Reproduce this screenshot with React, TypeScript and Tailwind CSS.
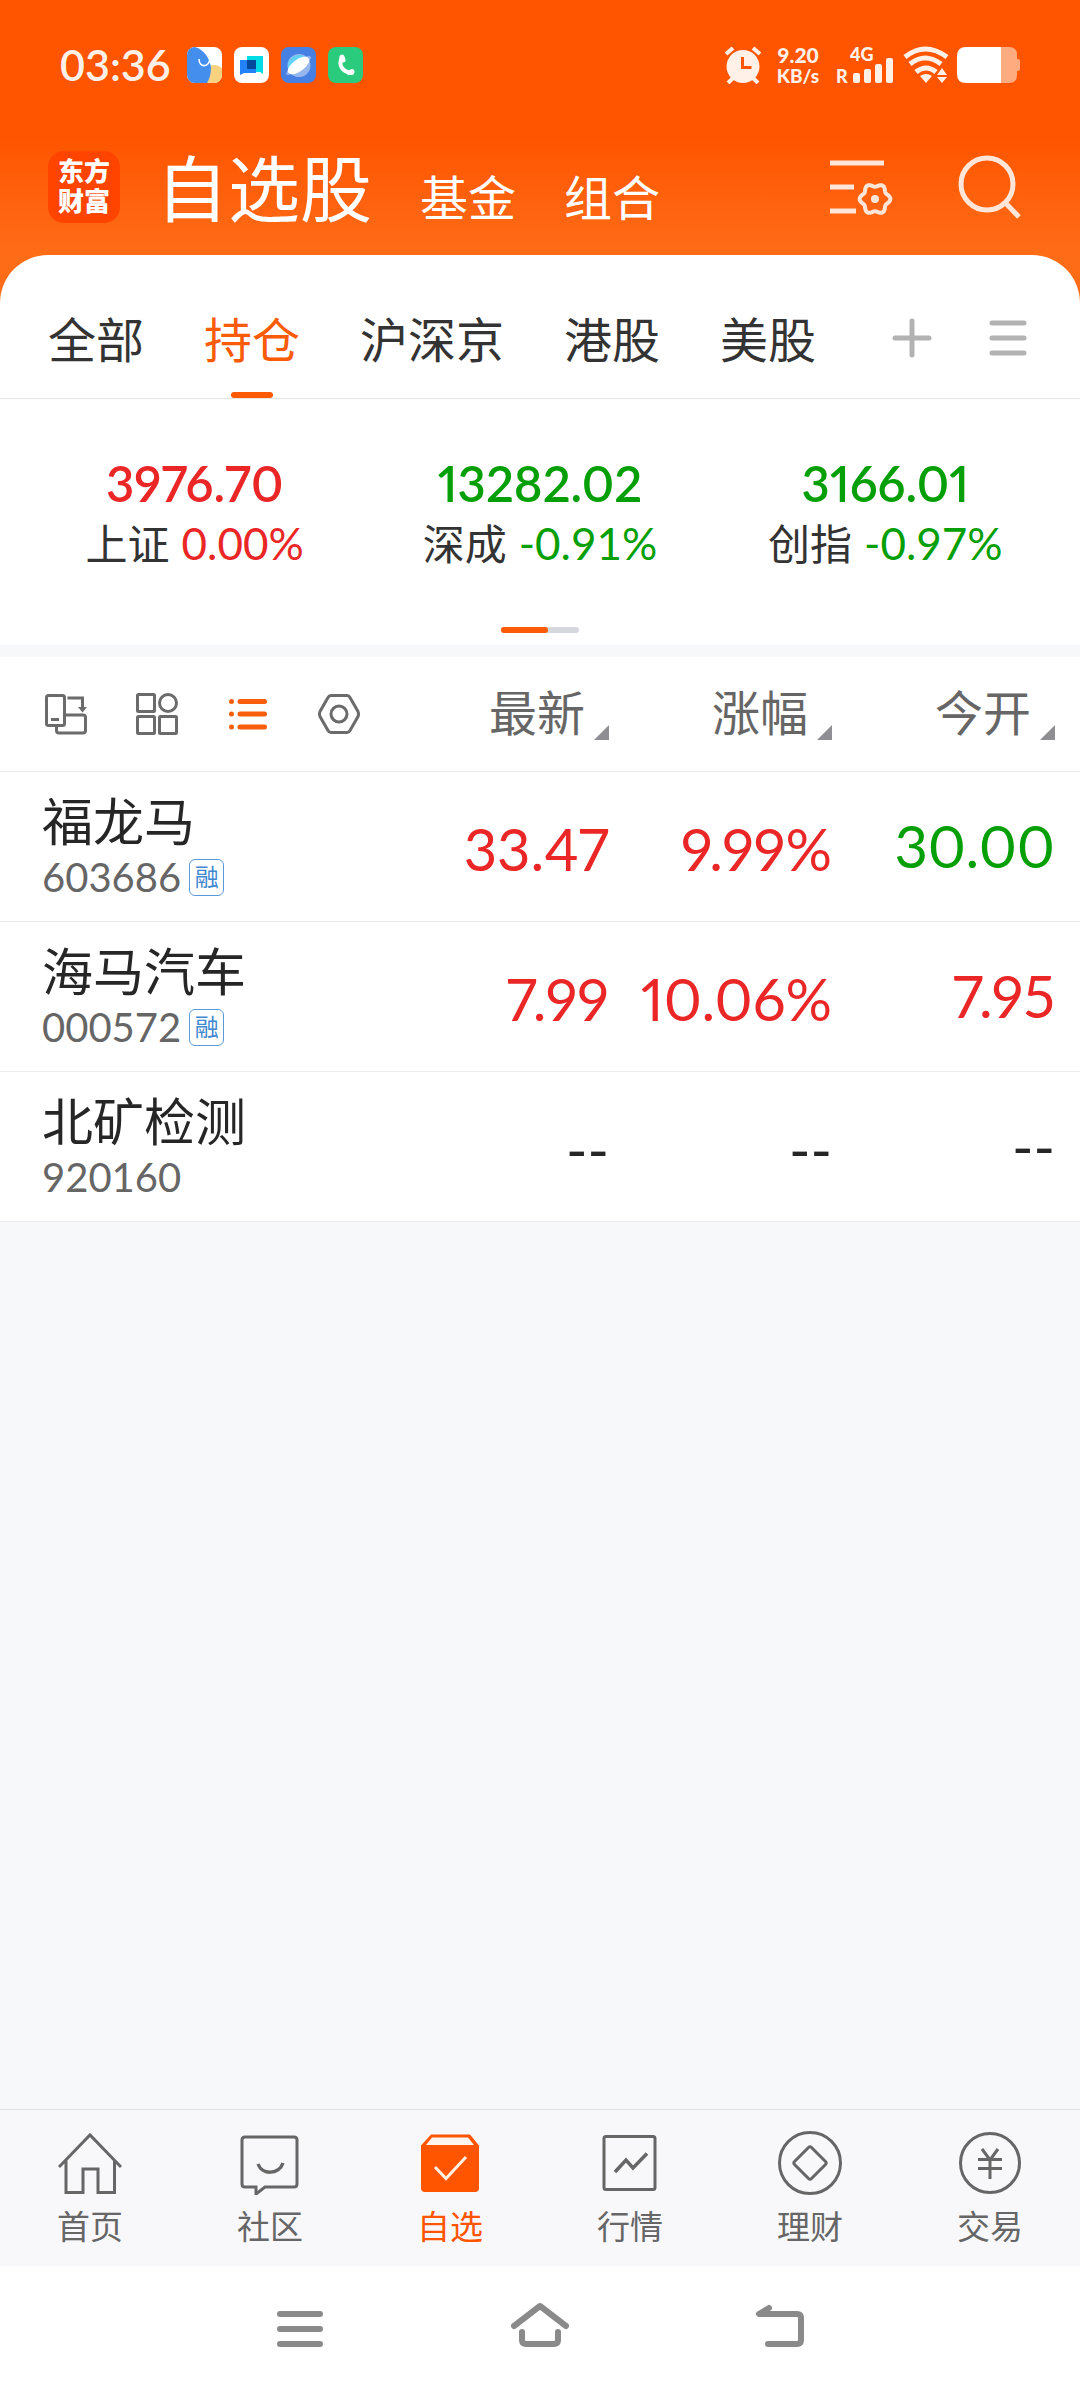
import { useState } from 'react';
import type { ReactNode } from 'react';
import clsx from 'clsx';

type Trend = 'up' | 'down' | 'none';

const trendColor: Record<Trend, string> = {
  up: 'text-[#ea2626]',
  down: 'text-[#079f07]',
  none: 'text-[#262626]',
};

const sections = ['自选股', '基金', '组合'];
const groups = ['全部', '持仓', '沪深京', '港股', '美股'];

const indices: { name: string; value: string; change: string; trend: Trend }[] = [
  { name: '上证', value: '3976.70', change: '0.00%', trend: 'up' },
  { name: '深成', value: '13282.02', change: '-0.91%', trend: 'down' },
  { name: '创指', value: '3166.01', change: '-0.97%', trend: 'down' },
];

const stocks: {
  name: string;
  code: string;
  margin: boolean;
  cells: { text: string; trend: Trend }[];
}[] = [
  {
    name: '福龙马',
    code: '603686',
    margin: true,
    cells: [
      { text: '33.47', trend: 'up' },
      { text: '9.99%', trend: 'up' },
      { text: '30.00', trend: 'down' },
    ],
  },
  {
    name: '海马汽车',
    code: '000572',
    margin: true,
    cells: [
      { text: '7.99', trend: 'up' },
      { text: '10.06%', trend: 'up' },
      { text: '7.95', trend: 'up' },
    ],
  },
  {
    name: '北矿检测',
    code: '920160',
    margin: false,
    cells: [
      { text: '--', trend: 'none' },
      { text: '--', trend: 'none' },
      { text: '--', trend: 'none' },
    ],
  },
];

// Six-lobed gear outline around (cx, cy)
function gearPoints(cx: number, cy: number) {
  const points = [];
  for (let i = 0; i < 72; i++) {
    const angle = (i * Math.PI) / 36;
    const r = 13.8 + 1.6 * Math.cos(6 * angle);
    points.push(`${(cx + r * Math.cos(angle)).toFixed(2)},${(cy + r * Math.sin(angle)).toFixed(2)}`);
  }
  return points.join(' ');
}

function StatusBar() {
  return (
    <div className="flex h-[130px] items-center justify-between px-[60px] text-[#fff0e8]">
      <div className="flex items-center gap-4">
        <span className="font-[family-name:Lato,sans-serif] text-[43px] leading-[52px] font-semibold">03:36</span>
        <div className="flex items-center gap-3">
          <svg className="h-9 w-[35px]" viewBox="0 0 35 36">
            <clipPath id="app-a">
              <rect width="35" height="36" rx="8" />
            </clipPath>
            <g clipPath="url(#app-a)">
              <rect width="35" height="36" fill="#fff" />
              <circle cx="27" cy="29" r="11" fill="#f8d27e" />
              <path d="M0 0h8c9 3 14 10 16 20 0 6-1 11-4 16H0z" fill="#448eee" />
              <path d="M12 12c0 9 10 9 11-1" fill="none" stroke="#fff" strokeWidth="1.6" />
            </g>
          </svg>
          <svg className="h-9 w-[35px]" viewBox="0 0 35 36">
            <rect width="35" height="36" rx="8" fill="#fff" />
            <path d="M13 9h16v18l-3-2H13z" fill="#00dce6" />
            <path d="M6 13h16v13H10l-4 2z" fill="#2482f8" />
            <rect x="13" y="13" width="9" height="9" fill="#054a9a" />
          </svg>
          <svg className="h-9 w-[35px]" viewBox="0 0 35 36">
            <rect width="35" height="36" rx="8" fill="#4580e2" />
            <circle cx="18" cy="18.500" r="11.500" fill="#95b7ee" />
            <path d="M7 22a11.500 11.500 0 0 1 19-11z" fill="#62d0f4" />
            <ellipse cx="17.500" cy="18.500" rx="15" ry="4" transform="rotate(-36 17.500 18.500)" fill="#8fb2ee" />
            <ellipse cx="17.500" cy="18.500" rx="12.500" ry="6" transform="rotate(-36 17.500 18.500)" fill="#fff" />
          </svg>
          <svg className="h-9 w-[35px]" viewBox="0 0 35 36">
            <rect width="35" height="36" rx="8" fill="#2bcb7d" />
            <path d="M14 10c-4 8 0 15 10 16" fill="none" stroke="#fff" strokeWidth="4" strokeLinecap="round" />
            <path d="M14 10l1 3M21 25.500l3-1" stroke="#fff" strokeWidth="5" strokeLinecap="round" />
          </svg>
        </div>
      </div>

      <div className="flex items-center">
        <svg className="h-[38px] w-[38px]" viewBox="0 0 38 38" fill="none" stroke="currentColor" strokeWidth="4">
          <circle cx="19" cy="20.500" r="16.500" fill="currentColor" stroke="none" />
          <path d="M2 8l7-6M36 8l-7-6M4 37l5-5M34 37l-5-5" />
          <path d="M18.500 11v10.500h9" stroke="#ff5500" strokeWidth="3" />
        </svg>
        <div className="ml-3 w-12 text-center font-[family-name:Lato,sans-serif] font-black">
          <div className="text-[21px] leading-[22px]">9.20</div>
          <div className="text-[19px] leading-[20px]">KB/s</div>
        </div>
        <svg className="ml-[14px] h-[46px] w-[59px]" viewBox="0 0 59 46" fill="currentColor">
          <text x="14" y="19" fontSize="18" fontWeight="900" fontFamily="Lato, sans-serif">
            4G
          </text>
          <text x="0" y="41" fontSize="18" fontWeight="900" fontFamily="Lato, sans-serif">
            R
          </text>
          <rect x="17" y="31" width="7" height="10" rx="2" />
          <rect x="28" y="27" width="7" height="14" rx="2" />
          <rect x="39" y="22" width="7" height="19" rx="2" />
          <rect x="50" y="16" width="7" height="25" rx="2" />
        </svg>
        <svg className="ml-2 h-[38px] w-[46px]" viewBox="0 0 46 38" fill="none" stroke="currentColor" strokeWidth="5">
          <path d="M2 11q20-16 42 0" />
          <path d="M7 18q15-12 31 0" />
          <path d="M13 26q10-8 20 0" />
          <path d="M17 30q6-4 12 0l-6 7z" fill="currentColor" stroke="none" />
          <path d="M34 29l5-7 5 7zM34 31l5 6 5-6z" fill="currentColor" stroke="none" />
        </svg>
        <svg className="ml-2 h-9 w-[63px]" viewBox="0 0 63 36">
          <path d="M44 0h8q8 0 8 8v4h1q2 0 2 2v8q0 2-2 2h-1v4q0 8-8 8h-8z" fill="#ffab80" />
          <path d="M44 0v36H9q-9 0-9-9V9q0-9 9-9z" fill="#fff" />
        </svg>
      </div>
    </div>
  );
}

function Header() {
  return (
    <header className="flex h-[125px] items-center justify-between pr-[58px] pb-3 pl-12 text-white">
      <div className="flex items-center gap-9">
        <div className="flex size-[72px] flex-col items-center justify-center rounded-2xl bg-[#ff4400] text-[26px] leading-[30px] font-black">
          <span>东方</span>
          <span>财富</span>
        </div>
        <nav className="flex items-baseline gap-12 pt-2">
          {sections.map((name, i) => (
            <button
              key={name}
              className={clsx(i === 0 ? 'text-[72px] leading-[90px]' : 'text-[48px] leading-[60px]')}
            >
              {name}
            </button>
          ))}
        </nav>
      </div>
      <div className="flex items-center gap-[64px] text-[#ffe6d8]">
        <button aria-label="管理自选">
          <svg className="size-16" viewBox="0 0 64 64" fill="none" stroke="currentColor" strokeWidth="5">
            <path d="M0 8h54M0 32h24M0 56h26" />
            <polygon points={gearPoints(45, 44)} strokeWidth="4" strokeLinejoin="round" />
            <circle cx="45" cy="44" r="4" fill="currentColor" stroke="none" />
          </svg>
        </button>
        <button aria-label="搜索">
          <svg className="size-16" viewBox="0 0 64 64" fill="none" stroke="currentColor" strokeWidth="5">
            <circle cx="29" cy="29" r="26" />
            <path d="M47.500 48L61 62" />
          </svg>
        </button>
      </div>
    </header>
  );
}

function GroupTabs() {
  const [active, setActive] = useState('持仓');

  return (
    <div className="flex justify-between border-b border-[#e5e5e5] pr-[52px] pl-12">
      <nav className="flex gap-[60px] text-[48px] leading-[60px] text-[#333]">
        {groups.map((name) => (
          <button
            key={name}
            onClick={() => setActive(name)}
            className={clsx('flex flex-col items-center pt-[57px]', active === name && 'text-[#f95b06]')}
          >
            {name}
            <span className={clsx('mt-5 h-[6px] w-[42px] rounded-full', active === name && 'bg-[#fc5a05]')} />
          </button>
        ))}
      </nav>
      <div className="flex gap-[56px] pt-[63px] text-[#b2b2b2]">
        <button aria-label="添加分组" className="h-10">
          <svg className="size-10" viewBox="0 0 40 40" stroke="currentColor" strokeWidth="5" strokeLinecap="round">
            <path d="M3 20h34M20 3v34" />
          </svg>
        </button>
        <button aria-label="全部分组" className="h-10">
          <svg className="size-10" viewBox="0 0 40 40" stroke="currentColor" strokeWidth="5" strokeLinecap="round">
            <path d="M4 5h32M4 20h32M4 35h32" />
          </svg>
        </button>
      </div>
    </div>
  );
}

function IndexStrip() {
  return (
    <section className="pt-[54px] pb-3">
      <div className="grid grid-cols-3 px-[22px] text-center">
        {indices.map((item) => (
          <div key={item.name}>
            <div
              className={clsx(
                'font-[family-name:Lato,sans-serif] text-[49px] leading-[60px] font-semibold proportional-nums',
                trendColor[item.trend]
              )}
            >
              {item.value}
            </div>
            <div className="mt-0.5 flex h-[60px] items-baseline justify-center gap-3 text-[42px] leading-[60px] text-[#333]">
              <span>{item.name}</span>
              <span
                className={clsx(
                  'font-[family-name:Lato,sans-serif] text-[44px] leading-[56px]',
                  trendColor[item.trend]
                )}
              >
                {item.change}
              </span>
            </div>
          </div>
        ))}
      </div>
      <div className="mx-auto mt-[52px] h-[6px] w-[78px] rounded-full bg-[#d5d8dc]">
        <div className="h-full w-[47px] rounded-full bg-[#fc5a05]" />
      </div>
    </section>
  );
}

function ViewSwitcher() {
  return (
    <div className="flex items-center gap-[49px] pl-[45px] text-[#6b6b6b]">
      <button aria-label="横屏">
        <svg className="size-[42px]" viewBox="0 0 42 42" fill="none" stroke="currentColor" strokeWidth="3">
          <rect x="1.500" y="2.500" width="18" height="30" rx="2" />
          <path d="M6 26.500h8M20 22h18q2.500 0 2.500 2.500v13q0 2.500-2.500 2.500H14q-2.500 0-2.500-2.500v-5M22.500 5h15v11" />
          <path d="M33 14h9l-4.500 5.500z" fill="currentColor" stroke="none" />
        </svg>
      </button>
      <button aria-label="宫格">
        <svg className="size-[42px]" viewBox="0 0 42 42" fill="none" stroke="currentColor" strokeWidth="3">
          <rect x="1.500" y="1.500" width="17" height="17" rx="1" />
          <circle cx="32" cy="10" r="8.500" />
          <rect x="1.500" y="23.500" width="17" height="17" rx="1" />
          <rect x="23.500" y="23.500" width="17" height="17" rx="1" />
        </svg>
      </button>
      <button aria-label="列表" className="text-[#f85e0c]">
        <svg className="size-[42px]" viewBox="0 0 42 42" stroke="currentColor" strokeWidth="5" strokeLinecap="round">
          <path d="M4.500 8.500v0M4.500 21v0M4.500 34v0M13 8.500h24.500M13 21h24.500M13 34h24.500" />
        </svg>
      </button>
      <button aria-label="设置">
        <svg className="size-[42px]" viewBox="0 0 42 42" fill="none" stroke="currentColor" strokeWidth="3">
          <path d="M13 2.500h16q2 0 3 2l8 14q1 2.500 0 5l-8 14q-1 2-3 2H13q-2 0-3-2l-8-14q-1-2.500 0-5l8-14q1-2 3-2z" />
          <circle cx="21" cy="21" r="8" />
        </svg>
      </button>
    </div>
  );
}

function StockTable() {
  return (
    <table className="w-full table-fixed bg-white">
      <thead>
        <tr className="h-[114px] border-b border-[#ebebeb]">
          <th>
            <ViewSwitcher />
          </th>
          {['最新', '涨幅', '今开'].map((label) => (
            <th key={label} className="w-[223px] pt-0.5 font-normal last:w-[248px] last:pr-[25px]">
              <button className="ml-auto flex items-end gap-[9px] text-[48px] leading-[60px] text-[#666]">
                {label}
                <svg className="mb-[5px] size-[15px]" viewBox="0 0 15 15">
                  <path d="M15 0v15H0z" fill="#8e8e93" />
                </svg>
              </button>
            </th>
          ))}
        </tr>
      </thead>
      <tbody>
        {stocks.map((stock) => (
          <tr key={stock.code} className="h-[150px] border-b border-[#ebebeb]">
            <td className="pt-0.5 pl-[42px]">
              <div className="text-[51px] leading-[60px] text-[#262626]">{stock.name}</div>
              <div className="flex h-[46px] items-center gap-2 text-[#666]">
                <span className="font-[family-name:Lato,sans-serif] text-[40px] leading-[46px]">{stock.code}</span>
                {stock.margin && (
                  <span className="flex h-[37px] w-[35px] items-center justify-center rounded-md border border-[#5a9ad8] text-[24px] leading-[35px] text-[#3f87d0]">
                    融
                  </span>
                )}
              </div>
            </td>
            {stock.cells.map((cell, i) => (
              <td
                key={i}
                className={clsx(
                  'pt-1.5 text-right font-[family-name:Lato,sans-serif] text-[58px] leading-[72px] proportional-nums last:pt-0 last:pr-[25px]',
                  trendColor[cell.trend]
                )}
              >
                {cell.text}
              </td>
            ))}
          </tr>
        ))}
      </tbody>
    </table>
  );
}

const tabs: { label: string; icon: ReactNode }[] = [
  {
    label: '首页',
    icon: <path d="M1 36L32 4l31 32M8 29v32.500h17V38h15v23.500h16.500V29" />,
  },
  {
    label: '社区',
    icon: (
      <>
        <path d="M7 6h49q3 0 3 3v44q0 3-3 3H27l-9 7v-7H7q-3 0-3-3V9q0-3 3-3z" />
        <path d="M20 33c4 11 21 11 25-1" strokeWidth="3.500" />
      </>
    ),
  },
  {
    label: '自选',
    icon: (
      <>
        <path d="M3 14.500L13 3.500h39L61 14.500V57q0 4-4 4H7q-4 0-4-4z" fill="currentColor" stroke="none" />
        <path d="M14 6.500h36l6 7.500H8z" fill="#fff4ee" stroke="none" />
        <path d="M17 36l11 11.500L48 26" stroke="#fff0e4" />
      </>
    ),
  },
  {
    label: '行情',
    icon: (
      <>
        <rect x="6" y="5.500" width="51" height="53" rx="2" />
        <path d="M17 41l11-12 7 8 14-14.500" strokeWidth="3.500" />
      </>
    ),
  },
  {
    label: '理财',
    icon: (
      <>
        <circle cx="32" cy="32" r="30.500" />
        <path d="M30.500 16.500q1.500-1.500 3 0l14 14q1.500 1.500 0 3l-14 14q-1.500 1.500-3 0l-14-14q-1.500-1.500 0-3z" />
      </>
    ),
  },
  {
    label: '交易',
    icon: (
      <>
        <circle cx="32" cy="32" r="29.500" />
        <path d="M24 18l8 11 8-11M32 28v20M20 28.500h24M20 37.500h24" />
      </>
    ),
  },
];

function TabBar() {
  const [active, setActive] = useState('自选');

  return (
    <nav className="grid h-[157px] grid-cols-6 border-t border-[#e1e3e6] bg-[#f8f8fb]">
      {tabs.map((tab) => (
        <button
          key={tab.label}
          onClick={() => setActive(tab.label)}
          className={clsx(
            'flex flex-col items-center pt-[21px]',
            active === tab.label ? 'text-[#ff5500]' : 'text-[#666]'
          )}
        >
          <svg className="size-16" viewBox="0 0 64 64" fill="none" stroke="currentColor" strokeWidth="3">
            {tab.icon}
          </svg>
          <span className="mt-[13px] text-[33px] leading-10">{tab.label}</span>
        </button>
      ))}
    </nav>
  );
}

function SystemNav() {
  return (
    <div className="flex h-[126px] items-center justify-center bg-white text-[#8a8a8a]">
      <button aria-label="最近任务" className="flex w-[240px] justify-center">
        <svg className="size-[60px]" viewBox="0 0 60 60" stroke="currentColor" strokeWidth="6" strokeLinecap="round">
          <path d="M10 15h40M10 30h40M10 45h40" />
        </svg>
      </button>
      <button aria-label="主屏幕" className="flex w-[240px] justify-center">
        <svg
          className="size-[60px]"
          viewBox="0 0 60 60"
          fill="none"
          stroke="currentColor"
          strokeWidth="6"
          strokeLinecap="round"
          strokeLinejoin="round"
        >
          <path d="M4 27L30 7l26 20M12 33v8q0 4 4 4h28q4 0 4-4v-8" />
        </svg>
      </button>
      <button aria-label="返回" className="flex w-[240px] justify-center">
        <svg
          className="size-[60px]"
          viewBox="0 0 60 60"
          fill="none"
          stroke="currentColor"
          strokeWidth="6"
          strokeLinecap="round"
          strokeLinejoin="round"
        >
          <path d="M19 9L9 15h38q4 0 4 4v22q0 4-4 4H18" />
        </svg>
      </button>
    </div>
  );
}

export default function App() {
  return (
    <div className="flex min-h-screen flex-col bg-[#f6f8fa] font-[family-name:Liberation_Sans,Noto_Sans_CJK_SC,sans-serif]">
      <div className="bg-[#ff6c17]">
        <div className="bg-linear-to-b from-[#ff5500] from-55% to-[#ff6c17]">
          <StatusBar />
          <Header />
        </div>
        <div className="rounded-t-[48px] bg-white">
          <GroupTabs />
          <IndexStrip />
        </div>
      </div>
      <main className="mt-3 flex-1">
        <StockTable />
      </main>
      <TabBar />
      <SystemNav />
    </div>
  );
}
